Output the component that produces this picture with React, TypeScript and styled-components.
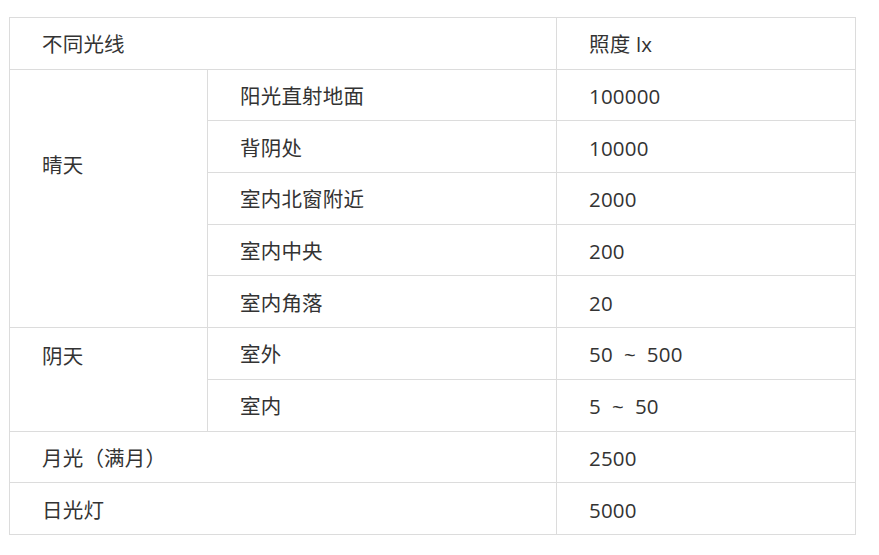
import React from "react";
import styled, { createGlobalStyle } from "styled-components";

interface Row {
  group?: { label: string; span: number; offset: number };
  place: string;
  wide?: boolean;
  lux: string;
}

const rows: Row[] = [
  { group: { label: "晴天", span: 5, offset: 80 }, place: "阳光直射地面", lux: "100000" },
  { place: "背阴处", lux: "10000" },
  { place: "室内北窗附近", lux: "2000" },
  { place: "室内中央", lux: "200" },
  { place: "室内角落", lux: "20" },
  { group: { label: "阴天", span: 2, offset: 13 }, place: "室外", lux: "50\u00a0\u00a0~\u00a0\u00a0500" },
  { place: "室内", lux: "5\u00a0\u00a0~\u00a0\u00a050" },
  { place: "月光（满月）", wide: true, lux: "2500" },
  { place: "日光灯", wide: true, lux: "5000" },
];

const GlobalStyle = createGlobalStyle`
  body {
    margin: 0;
    background: #fff;
    font-family: "Open Sans", "Noto Sans CJK SC", sans-serif;
    color: #333;
  }
`;

const Page = styled.div`
  padding: 17px 0 0 9px;
`;

const Table = styled.table`
  width: 846px;
  table-layout: fixed;
  border-collapse: collapse;
  font-size: 20.5px;
`;

const Cell = styled.td<{ $offset?: number }>`
  border: 1px solid #dcdcdc;
  padding: 11.35px 32px 9.35px;
  padding-top: ${(p) => (p.$offset !== undefined ? `${p.$offset}px` : "11.35px")};
  line-height: 30px;
  vertical-align: ${(p) => (p.$offset !== undefined ? "top" : "middle")};
  text-align: left;
  white-space: nowrap;
  letter-spacing: 0.2px;
`;

export default function App() {
  return (
    <Page>
      <GlobalStyle />
      <Table>
        <colgroup>
          <col style={{ width: 198 }} />
          <col style={{ width: 349 }} />
          <col style={{ width: 299 }} />
        </colgroup>
        <tbody>
          <tr>
            <Cell colSpan={2}>不同光线</Cell>
            <Cell>照度 lx</Cell>
          </tr>
          {rows.map((r) => (
            <tr key={r.place + r.lux}>
              {r.group && (
                <Cell rowSpan={r.group.span} $offset={r.group.offset}>
                  {r.group.label}
                </Cell>
              )}
              <Cell colSpan={r.wide ? 2 : 1}>{r.place}</Cell>
              <Cell>{r.lux}</Cell>
            </tr>
          ))}
        </tbody>
      </Table>
    </Page>
  );
}
